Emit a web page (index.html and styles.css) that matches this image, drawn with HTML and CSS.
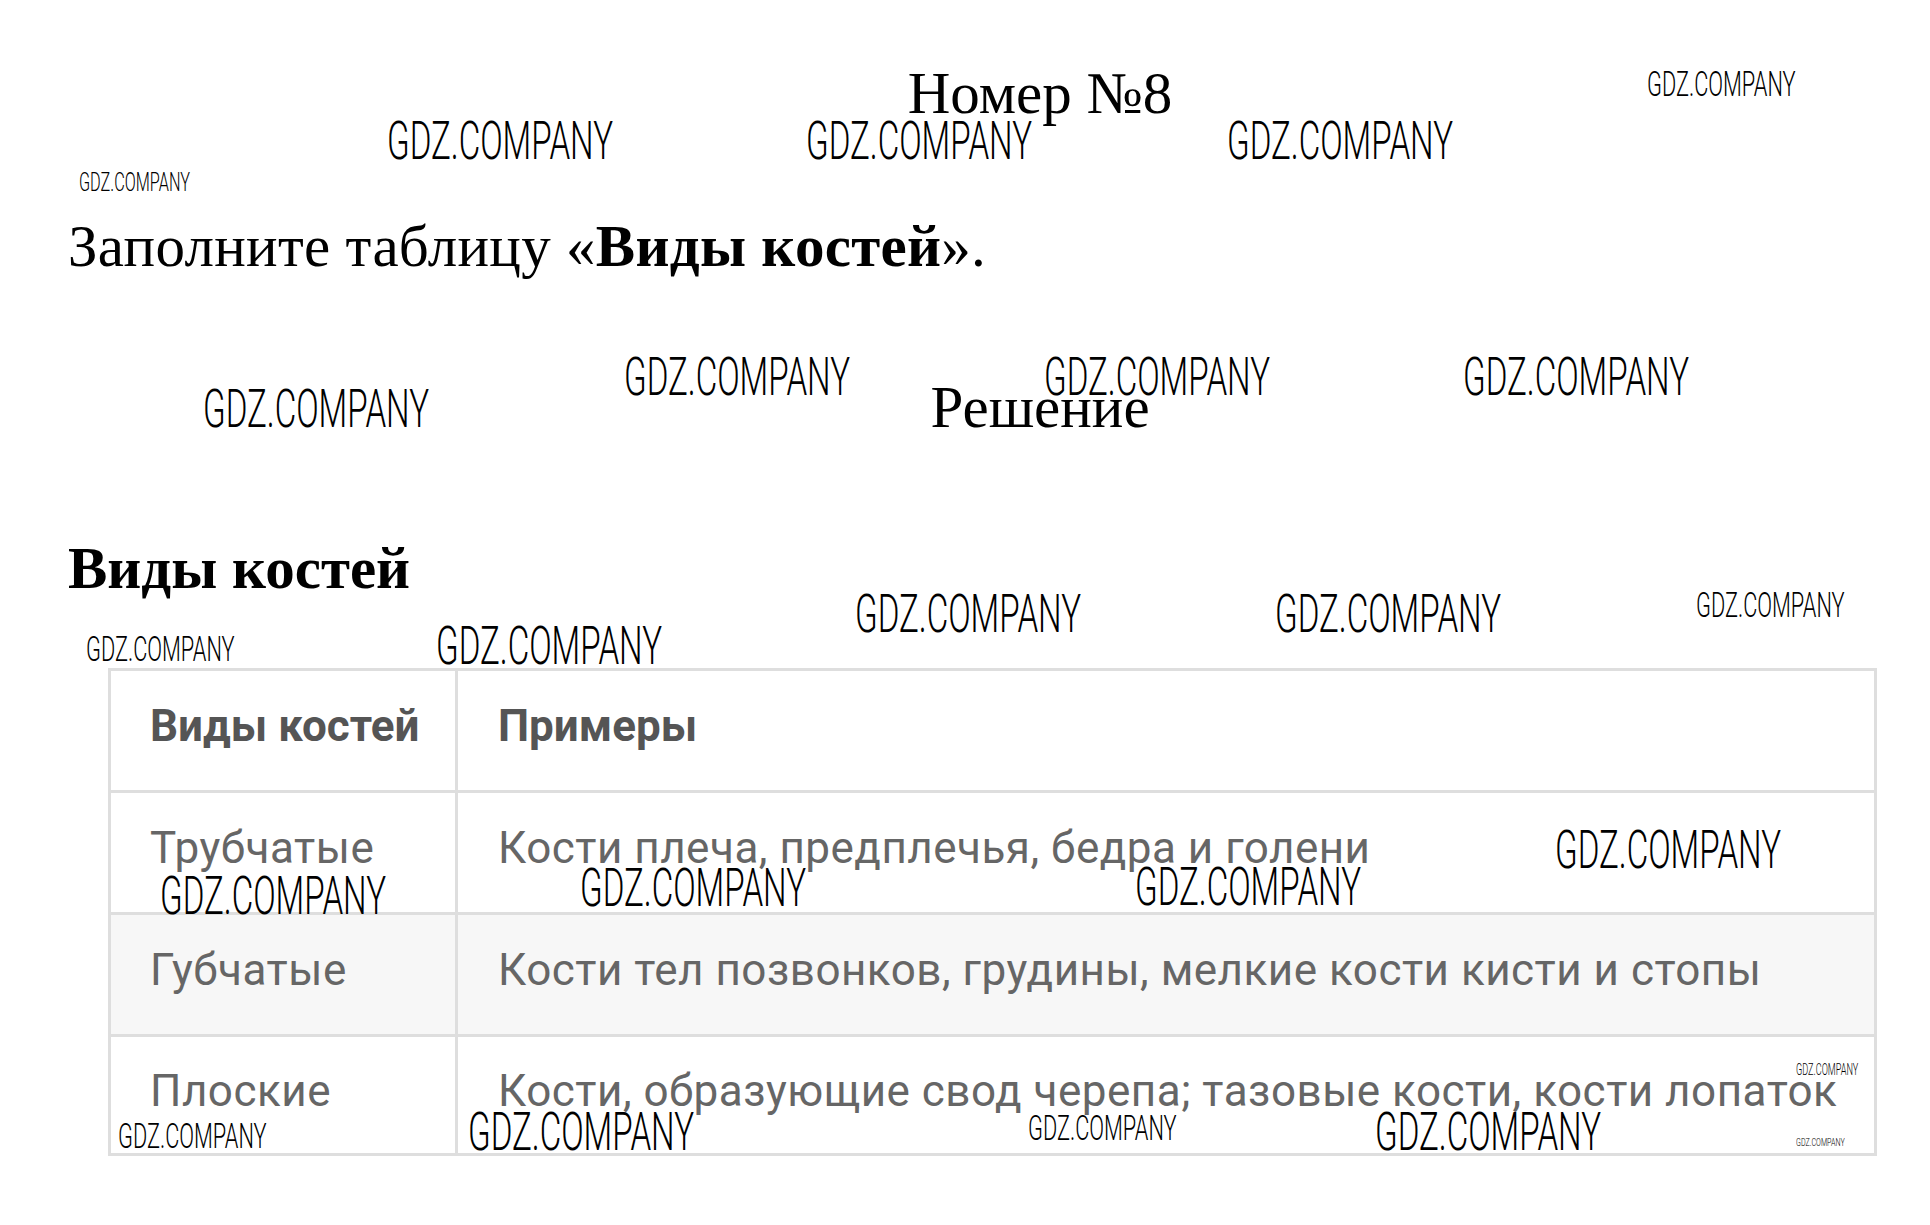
FILE: index.html
```html
<!DOCTYPE html>
<html lang="ru">
<head>
<meta charset="utf-8">
<title>Номер №8</title>
<link rel="stylesheet" href="styles.css">
</head>
<body>
<div class="page">
  <h1 class="title">Номер №8</h1>
  <p class="task">Заполните таблицу «<b>Виды костей</b>».</p>
  <h2 class="title solution">Решение</h2>
  <h3 class="subtitle">Виды костей</h3>
  <table class="bones">
    <tr class="head">
      <td class="c1"><div class="cell">Виды костей</div></td>
      <td class="c2"><div class="cell">Примеры</div></td>
    </tr>
    <tr>
      <td class="c1"><div class="cell">Трубчатые</div></td>
      <td class="c2"><div class="cell">Кости плеча, предплечья, бедра и голени</div></td>
    </tr>
    <tr class="alt">
      <td class="c1"><div class="cell">Губчатые</div></td>
      <td class="c2"><div class="cell">Кости тел позвонков, грудины, мелкие кости кисти и стопы</div></td>
    </tr>
    <tr class="last">
      <td class="c1"><div class="cell">Плоские</div></td>
      <td class="c2"><div class="cell">Кости, образующие свод черепа; тазовые кости, кости лопаток</div></td>
    </tr>
  </table>

  <span class="wm s w1">GDZ.COMPANY</span>
  <span class="wm l w2">GDZ.COMPANY</span>
  <span class="wm l w3">GDZ.COMPANY</span>
  <span class="wm l w4">GDZ.COMPANY</span>
  <span class="wm xs w5">GDZ.COMPANY</span>
  <span class="wm l w6">GDZ.COMPANY</span>
  <span class="wm l w7">GDZ.COMPANY</span>
  <span class="wm l w8">GDZ.COMPANY</span>
  <span class="wm l w9">GDZ.COMPANY</span>
  <span class="wm l w10">GDZ.COMPANY</span>
  <span class="wm l w11">GDZ.COMPANY</span>
  <span class="wm s w12">GDZ.COMPANY</span>
  <span class="wm s w13">GDZ.COMPANY</span>
  <span class="wm l w14">GDZ.COMPANY</span>
  <span class="wm l w15">GDZ.COMPANY</span>
  <span class="wm l w16">GDZ.COMPANY</span>
  <span class="wm l w17">GDZ.COMPANY</span>
  <span class="wm l w18">GDZ.COMPANY</span>
  <span class="wm t w19">GDZ.COMPANY</span>
  <span class="wm s w20">GDZ.COMPANY</span>
  <span class="wm l w21">GDZ.COMPANY</span>
  <span class="wm s w22">GDZ.COMPANY</span>
  <span class="wm l w23">GDZ.COMPANY</span>
  <span class="wm tt w24">GDZ.COMPANY</span>
</div>
</body>
</html>
```

FILE: styles.css
```css
html, body {
  margin: 0;
  padding: 0;
  background: #fff;
}

.page {
  position: relative;
  width: 1930px;
  height: 1225px;
  overflow: hidden;
  font-family: "Liberation Serif", "Times New Roman", serif;
  color: #000;
  padding-top: 63px;
  box-sizing: border-box;
}

.title {
  margin: 0;
  padding-left: 150px;
  text-align: center;
  font-size: 59px;
  line-height: 60px;
  font-weight: normal;
}

.task {
  margin: 93px 0 0;
  padding-left: 68px;
  font-size: 59px;
  line-height: 60px;
  letter-spacing: 0.3px;
}

.task b {
  font-weight: bold;
}

.solution {
  margin-top: 101px;
}

.subtitle {
  margin: 101px 0 0;
  padding-left: 68px;
  font-size: 59px;
  line-height: 60px;
  font-weight: bold;
}

.bones {
  margin: 70px 0 0 108px;
  width: 1769px;
  border-collapse: separate;
  border-spacing: 0;
  border: 3px solid #dedede;
  font-family: Roboto, "Liberation Sans", sans-serif;
  font-size: 44px;
  color: #666;
}

.bones td {
  padding: 0;
  border-top: 3px solid #dedede;
  vertical-align: middle;
}

.bones tr:first-child td {
  border-top: 0;
}

.bones td.c1 {
  width: 344px;
}

.bones td.c2 {
  border-left: 3px solid #dedede;
}

.bones .cell {
  height: 119px;
  box-sizing: border-box;
  display: flex;
  align-items: center;
  padding: 0 0 9px 39px;
  white-space: nowrap;
  letter-spacing: 0.5px;
}

.bones .last .cell {
  height: 116px;
}

.bones td.c2 .cell {
  padding-left: 40px;
}

.bones .head .cell {
  font-weight: bold;
  color: #555;
  letter-spacing: 0;
}

.bones .alt td {
  background: #f7f7f7;
}

/* watermarks overlaid on the page */
.wm {
  position: absolute;
  font-family: Roboto, "Liberation Sans", sans-serif;
  font-weight: 300;
  line-height: 1;
  white-space: nowrap;
  color: #000;
  transform: scaleX(0.613);
  transform-origin: 0 0;
}

.wm.l { font-size: 54px; }
.wm.s { font-size: 35px; transform: scaleX(0.622); }
.wm.xs { font-size: 25px; transform: scaleX(0.65); }
.wm.t { font-size: 16px; transform: scaleX(0.57); }
.wm.tt { font-size: 11.5px; transform: scaleX(0.62); }

.w1 { left: 1647px; top: 67px; }
.w2 { left: 387px; top: 114px; }
.w3 { left: 806px; top: 114px; }
.w4 { left: 1227px; top: 114px; }
.w5 { left: 79px; top: 170px; }
.w6 { left: 203px; top: 382px; }
.w7 { left: 624px; top: 350px; }
.w8 { left: 1044px; top: 350px; }
.w9 { left: 1463px; top: 350px; }
.w10 { left: 855px; top: 587px; }
.w11 { left: 1275px; top: 587px; }
.w12 { left: 1696px; top: 588px; }
.w13 { left: 86px; top: 632px; }
.w14 { left: 436px; top: 619px; }
.w15 { left: 1555px; top: 823px; }
.w16 { left: 160px; top: 869px; }
.w17 { left: 580px; top: 861px; }
.w18 { left: 1135px; top: 860px; }
.w19 { left: 1796px; top: 1062px; }
.w20 { left: 118px; top: 1119px; }
.w21 { left: 468px; top: 1105px; }
.w22 { left: 1028px; top: 1111px; }
.w23 { left: 1375px; top: 1105px; }
.w24 { left: 1796px; top: 1137px; }
```
